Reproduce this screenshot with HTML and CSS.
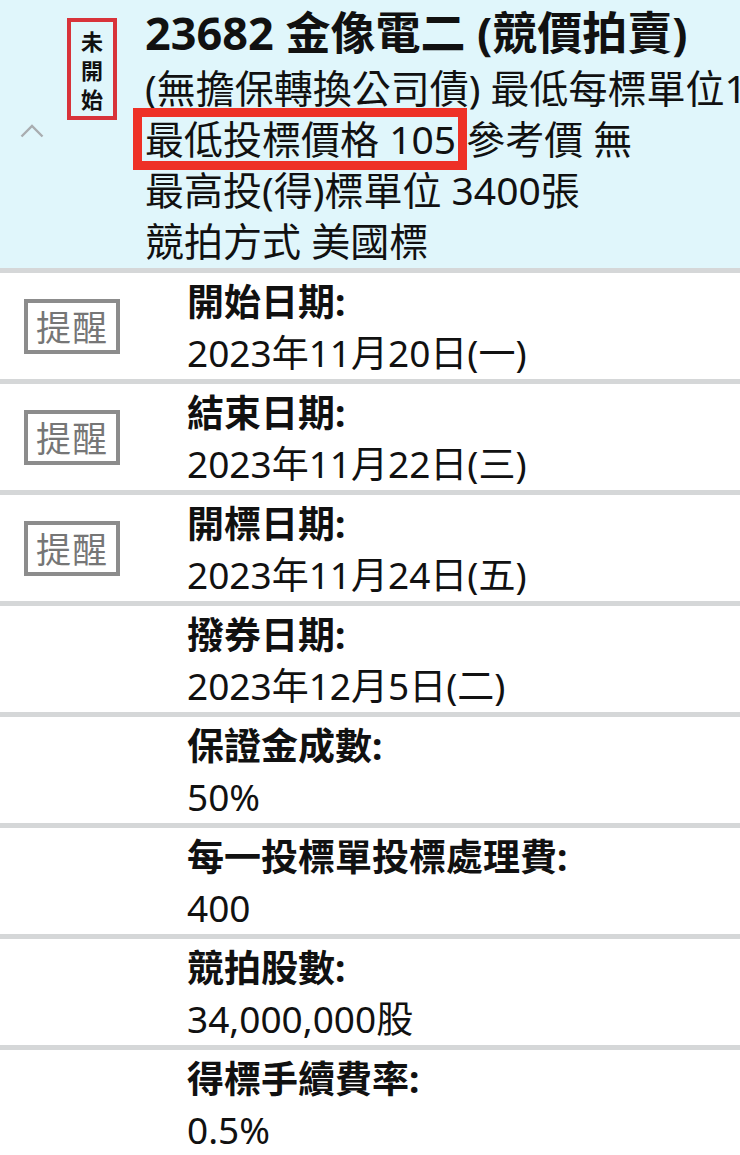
FILE: index.html
```html
<!DOCTYPE html>
<html lang="zh-Hant">
<head>
<meta charset="utf-8">
<title>23682 金像電二</title>
<link rel="stylesheet" href="styles.css">
</head>
<body>
<div class="page">
  <header class="head">
    <div class="chev">
      <svg width="24" height="14" viewBox="0 0 24 14"><polyline points="1.5,12.5 12,2 22.5,12.5" fill="none" stroke="#a9adb0" stroke-width="2.4"/></svg>
    </div>
    <div class="badge"><span>未</span><span>開</span><span>始</span></div>
    <div class="info">
      <div class="title">23682 金像電二 (競價拍賣)</div>
      <div class="line">(無擔保轉換公司債) 最低每標單位1張</div>
      <div class="line"><span class="hl">最低投標價格 105</span> 參考價 無</div>
      <div class="line">最高投(得)標單位 3400張</div>
      <div class="line">競拍方式 美國標</div>
    </div>
  </header>

  <div class="row">
    <div class="side"><div class="remind">提醒</div></div>
    <div class="cell"><div class="lbl">開始日期:</div><div class="val">2023年11月20日(一)</div></div>
  </div>
  <div class="row">
    <div class="side"><div class="remind">提醒</div></div>
    <div class="cell"><div class="lbl">結束日期:</div><div class="val">2023年11月22日(三)</div></div>
  </div>
  <div class="row">
    <div class="side"><div class="remind">提醒</div></div>
    <div class="cell"><div class="lbl">開標日期:</div><div class="val">2023年11月24日(五)</div></div>
  </div>
  <div class="row">
    <div class="side"></div>
    <div class="cell"><div class="lbl">撥券日期:</div><div class="val">2023年12月5日(二)</div></div>
  </div>
  <div class="row">
    <div class="side"></div>
    <div class="cell"><div class="lbl">保證金成數:</div><div class="val">50%</div></div>
  </div>
  <div class="row">
    <div class="side"></div>
    <div class="cell"><div class="lbl">每一投標單投標處理費:</div><div class="val">400</div></div>
  </div>
  <div class="row">
    <div class="side"></div>
    <div class="cell"><div class="lbl">競拍股數:</div><div class="val">34,000,000股</div></div>
  </div>
  <div class="row last">
    <div class="side"></div>
    <div class="cell"><div class="lbl">得標手續費率:</div><div class="val">0.5%</div></div>
  </div>
</div>
</body>
</html>
```

FILE: styles.css
```css
* { box-sizing: border-box; }
html, body {
  margin: 0;
  padding: 0;
  background: #ffffff;
  overflow-x: hidden;
}
body {
  font-family: "Noto Sans", "Noto Sans CJK TC", sans-serif;
  color: #111111;
}
.page {
  width: 740px;
  overflow: hidden;
}
.head {
  display: flex;
  align-items: flex-start;
  background: #e0f6fb;
  height: 268px;
  border-bottom: 5px solid #d5d7d8;
  box-sizing: content-box;
}
.chev {
  align-self: center;
  margin-left: 20px;
  width: 24px;
  height: 14px;
  margin-top: -6px;
  display: flex;
}
.badge {
  margin-left: 23px;
  margin-top: 18px;
  width: 50px;
  height: 102px;
  border: 4px solid #d8333a;
  display: flex;
  flex-direction: column;
  align-items: center;
  justify-content: center;
  font-family: "Noto Sans CJK TC", sans-serif;
  font-weight: 700;
  font-size: 22px;
  line-height: 29px;
  color: #111;
}
.badge span {
  display: block;
  height: 29px;
}
.info {
  margin-left: 28px;
  padding-top: 4px;
  flex: 1;
  min-width: 0;
  white-space: nowrap;
}
.title {
  font-size: 45px;
  font-weight: 700;
  line-height: 58px;
}
.line {
  font-size: 39px;
  line-height: 51px;
}
.hl {
  display: inline-block;
  position: relative;
  height: 51px;
  line-height: 51px;
  vertical-align: top;
}
.hl::after {
  content: "";
  position: absolute;
  left: -12px;
  right: -11px;
  top: -5px;
  bottom: -6px;
  border: 9px solid #ee3126;
}
.row {
  display: flex;
  height: 111px;
  border-bottom: 5px solid #d5d7d8;
}
.row.last {
  border-bottom: none;
}
.side {
  width: 187px;
  flex: none;
  display: flex;
  align-items: center;
}
.remind {
  margin-left: 24px;
  width: 96px;
  height: 55px;
  border: 4px solid #8c8c8c;
  background: #ffffff;
  color: #767676;
  font-family: "Noto Sans CJK TC", sans-serif;
  font-size: 35px;
  line-height: 46px;
  text-align: center;
  letter-spacing: 1px;
}
.cell {
  padding-top: 3px;
  white-space: nowrap;
}
.lbl {
  font-size: 37px;
  font-weight: 700;
  line-height: 51px;
}
.val {
  font-size: 37px;
  line-height: 51px;
}
```
